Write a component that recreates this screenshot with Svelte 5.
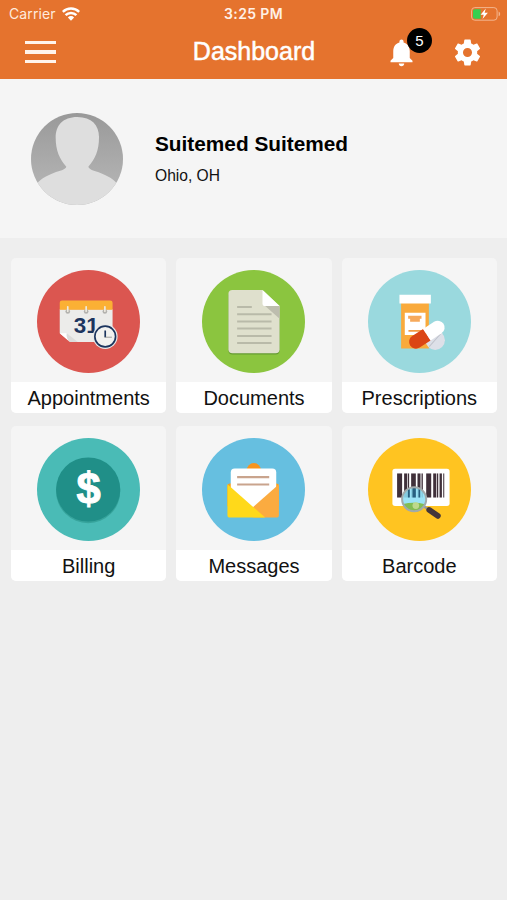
<script lang="ts">
	let user = { name: 'Suitemed Suitemed', location: 'Ohio, OH' };
	let notifications = 5;

	let tiles = [
		{ id: 'appointments', title: 'Appointments', color: '#db5650' },
		{ id: 'documents', title: 'Documents', color: '#8bc53f' },
		{ id: 'prescriptions', title: 'Prescriptions', color: '#9ad9de' },
		{ id: 'billing', title: 'Billing', color: '#4abbb6' },
		{ id: 'messages', title: 'Messages', color: '#66bfe0' },
		{ id: 'barcode', title: 'Barcode', color: '#ffc421' },
	];

	// [x, width] of each stripe on the barcode label
	let bars = [[87, 15], [108, 9], [119, 4], [129, 14], [148, 9], [160, 4], [174, 15], [195, 9], [206, 4], [214, 7], [225, 3]];
</script>

<div class="screen">
	<header>
		<div class="status">
			<div class="carrier">
				<span>Carrier</span>
				<svg width="18" height="14" viewBox="0 0 18 14" fill="none" stroke="#fff" stroke-width="2.5">
					<path d="M.8 4.900a11.600 11.600 0 0 1 16.400 0M3.600 8.200a7.500 7.500 0 0 1 10.800 0" />
					<path d="M5.900 10.400a4.400 4.400 0 0 1 6.200 0L9 13.700z" fill="#fff" stroke="none" />
				</svg>
			</div>
			<div class="time">3:25 PM</div>
			<svg class="battery" width="30" height="14" viewBox="0 0 30 14">
				<rect x=".6" y=".6" width="25.5" height="12.6" rx="3.2" fill="none" stroke="#f3b58e" />
				<path d="M27.6 4.6v4.6q1.6-.7 1.6-2.3t-1.6-2.3" fill="#f3b58e" />
				<path d="M3.8 2.2h5.8v9.6H3.8q-1.8 0-1.8-1.8V4q0-1.8 1.8-1.8" fill="#35d04f" />
				<path d="M14.8 1.6 9.6 7.7h3.2L11.5 12l5.4-6.2h-3.3z" fill="#fff" />
			</svg>
		</div>
		<div class="navbar">
			<button class="menu" aria-label="Menu"><i></i><i></i><i></i></button>
			<h1>Dashboard</h1>
			<div class="actions">
				<button class="bell" aria-label="Notifications">
					<svg width="33" height="33" viewBox="0 0 24 24" fill="#fff">
						<path d="M12 22c1.1 0 2-.9 2-2h-4c0 1.1.9 2 2 2zm6-6v-5c0-3.07-1.63-5.64-4.5-6.32V4c0-.83-.67-1.5-1.5-1.5s-1.500.67-1.500 1.500v.68C7.640 5.360 6 7.920 6 11v5l-2 2v1h16v-1l-2-2z" />
					</svg>
					<span class="badge">{notifications}</span>
				</button>
				<button class="settings" aria-label="Settings">
					<svg width="31" height="31" viewBox="0 0 24 24" fill="#fff">
						<path d="M19.430 12.980c.04-.32.07-.64.07-.98s-.03-.66-.07-.98l2.110-1.650c.19-.15.24-.42.12-.64l-2-3.460c-.12-.22-.39-.3-.61-.22l-2.490 1c-.52-.4-1.080-.73-1.690-.98l-.38-2.650C14.460 2.180 14.250 2 14 2h-4c-.25 0-.46.18-.49.42l-.38 2.650c-.61.25-1.170.59-1.690.98l-2.490-1c-.23-.09-.49 0-.61.22l-2 3.460c-.13.22-.07.49.12.64l2.110 1.650c-.04.32-.07.65-.07.98s.03.66.07.98l-2.110 1.650c-.19.15-.24.42-.12.64l2 3.460c.12.22.39.3.61.22l2.490-1c.52.4 1.080.73 1.690.98l.38 2.650c.03.24.24.42.49.42h4c.25 0 .46-.18.49-.42l.38-2.650c.61-.25 1.170-.59 1.690-.98l2.490 1c.23.09.49 0 .61-.22l2-3.460c.12-.22.07-.49-.12-.64l-2.110-1.650zM12 15.500a3.500 3.500 0 1 1 0-7 3.500 3.500 0 0 1 0 7z" />
					</svg>
				</button>
			</div>
		</div>
	</header>

	<section class="profile">
		<svg class="avatar" width="92" height="92" viewBox="0 0 276 276">
			<defs>
				<clipPath id="face"><circle cx="138" cy="138" r="138" /></clipPath>
				<linearGradient id="shade" x1="0" y1="0" x2="0" y2="1">
					<stop offset="0" stop-color="#999" />
					<stop offset=".7" stop-color="#b0b0b0" />
				</linearGradient>
			</defs>
			<g clip-path="url(#face)">
				<rect width="276" height="276" fill="url(#shade)" />
				<path fill="#dedede" d="M139 12c44 0 66 26 65 62 0 38-12 64-32 87 3 9 15 11 29 16 30 11 52 24 60 40v70H15v-70c8-16 30-29 60-40 14-5 28-7 31-16-20-23-32-49-32-87 0-36 21-62 65-62z" />
			</g>
		</svg>
		<div class="who">
			<h2>{user.name}</h2>
			<p>{user.location}</p>
		</div>
	</section>

	<main class="tiles">
		{#each tiles as tile}
			<div class="tile">
				<div class="picture">
					<svg width="103" height="103" viewBox="0 0 308 308">
						<circle cx="154" cy="154" r="154" fill={tile.color} />
						{#if tile.id === 'appointments'}
							<path d="M68 117h158v98H100l-32-26z" fill="#ececea" />
							<path d="M68 119V98q0-7 7-7h144q7 0 7 7v21z" fill="#fbb034" />
							<path d="M68 189l21 0q-2 14 9 26z" fill="#fff" />
							<path d="M89 189q-2 14 9 26h24z" fill="#dcdcda" />
							{#each [92, 147, 203] as x}
								<circle cx={x} cy="124" r="7" fill="#b3b2ae" />
								<path d="M{x} 110v13" stroke="#eeeae0" stroke-width="5" stroke-linecap="round" />
							{/each}
							<text x="110" y="187" class="day">31</text>
							<circle cx="204" cy="199" r="37" fill="#e8e8e8" />
							<circle cx="204" cy="199" r="31" fill="#f2f2f0" stroke="#1c355e" stroke-width="5" />
							<path d="M204 181v20" stroke="#1c355e" stroke-width="5" />
							<path d="M202 201h22" stroke="#777" stroke-width="2" />
						{:else if tile.id === 'documents'}
							<path d="M91 64h90l51 49v128q0 12-12 12H91q-12 0-12-12V76q0-12 12-12z" fill="#659b31" />
							<path d="M91 60h90l51 48v129q0 12-12 12H91q-12 0-12-12V72q0-12 12-12z" fill="#dfe0cd" />
							<path d="M189 108h43v38z" fill="#bdbdae" />
							<path d="M181 60l51 48h-43q-8 0-8-8z" fill="#fff" />
							<path d="M105 111h44M105 132h103M105 154h103M105 175h103M105 197h103M105 218h103" stroke="#b9baa9" stroke-width="6" />
						{:else if tile.id === 'prescriptions'}
							<path d="M99 98h83v137H99z" fill="#f9aa3c" />
							<path d="M94 74h94v26H94z" fill="#fff" />
							<path d="M110 128h62v66h-62z" fill="#fff" />
							<path d="M120 137h40v9h-5v9h-29v-9h-6z" fill="#f6a95b" />
							<path d="M121 182h40" stroke="#f39a43" stroke-width="5" />
							<circle cx="201" cy="210" r="29" fill="#dde0e8" />
							<path d="M183 229l35-39" stroke="#bfc2cb" stroke-width="3" />
							<g transform="translate(176 193.500) rotate(-33)">
								<path d="M0-20.500h-39a20.500 20.500 0 0 0 0 41H0z" fill="#db4515" />
								<path d="M0-20.500h39a20.500 20.500 0 0 1 0 41H0z" fill="#fff" />
							</g>
						{:else if tile.id === 'billing'}
							<circle cx="153" cy="159" r="96" fill="#37a49c" />
							<circle cx="153" cy="154" r="96" fill="#208f88" />
							<text x="154" y="196" class="dollar">$</text>
						{:else if tile.id === 'messages'}
							<circle cx="155" cy="96" r="21" fill="#f7941e" />
							<path d="M76 144q0-8 8-8h138q8 0 8 8v60H76z" fill="#f7a01e" />
							<path d="M98 91h112q12 0 12 12v105H86V103q0-12 12-12z" fill="#fff" />
							<path d="M230 138v92q0 8-8 8h-69v-32z" fill="#fbab40" />
							<path d="M76 138l77 68 36 32H84q-8 0-8-8z" fill="#ffd91a" />
							<path d="M105 117h96M105 139h96" stroke="#c9a48d" stroke-width="6" />
						{:else}
							<rect x="73" y="92" width="171" height="111" rx="8" fill="#fff" />
							{#each bars as [x, width]}
								<rect {x} y="106" {width} height="72" fill="#40303a" />
							{/each}
							<path d="M168 205l14 10" stroke="#9a9a98" stroke-width="7" />
							<path d="M183 215l26 18" stroke="#44363a" stroke-width="17" stroke-linecap="round" />
							<circle cx="138" cy="183" r="36" fill="#8ddff5" fill-opacity=".88" />
							<path d="M105 197q33-7 66 1-13 24-33 23-24-1-33-24z" fill="#82bd53" />
							<circle cx="143" cy="202" r="10" fill="#bed98b" />
							<path d="M119 153h6v25h-6zM133 149h10v29h-10zM151 153h5v25h-5z" fill="#276080" />
							<circle cx="138" cy="183" r="36" fill="none" stroke="#a1aaab" stroke-width="6" />
						{/if}
					</svg>
				</div>
				<div class="label">{tile.title}</div>
			</div>
		{/each}
	</main>
</div>

<style>
	:global(body) {
		background: #eee;
	}

	.screen {
		min-height: 900px;
		background: #eee;
		color: #111;
		font-family: "Liberation Sans", Arial, sans-serif;
	}

	header {
		height: 79px;
		background: #e5732e;
		color: #fff;
	}

	.status {
		display: grid;
		grid-template-columns: 1fr auto 1fr;
		align-items: center;
		height: 27px;
		padding: 0 6px 0 9px;
		box-sizing: border-box;
		font-family: Inter, sans-serif;
		font-size: 14px;
	}

	.carrier {
		display: flex;
		align-items: center;
		gap: 6px;
		color: #ffeadd;
		letter-spacing: 0.1px;
	}

	.time {
		margin-right: 3px;
		font-size: 14px;
		font-weight: 600;
		color: #fff0e6;
		letter-spacing: 0.35px;
	}

	.battery {
		justify-self: end;
	}

	.navbar {
		display: grid;
		grid-template-columns: 1fr auto 1fr;
		align-items: center;
		height: 50px;
		padding: 0 24px 0 25px;
	}

	button {
		display: flex;
		padding: 0;
		border: none;
		background: none;
		color: inherit;
		font: inherit;
	}

	.menu {
		flex-direction: column;
		gap: 6px;
		width: 31px;
	}

	.menu i {
		width: 31px;
		height: 3.3px;
		background: #fff4ec;
	}

	h1 {
		margin: 0;
		padding-bottom: 2px;
		font-size: 25px;
		font-weight: normal;
		line-height: 48px;
		-webkit-text-stroke: 0.5px #fff;
	}

	.actions {
		display: flex;
		justify-content: flex-end;
		align-items: center;
		gap: 34px;
	}

	.bell {
		position: relative;
	}

	.badge {
		position: absolute;
		left: 22px;
		top: -8px;
		width: 25px;
		height: 25px;
		border-radius: 50%;
		background: #000;
		font-size: 15px;
		line-height: 25px;
		text-align: center;
	}

	.profile {
		display: flex;
		align-items: center;
		gap: 32px;
		height: 159px;
		padding-left: 31px;
		background: #f5f5f5;
	}

	h2 {
		margin: 0;
		font-size: 20.8px;
		line-height: 28px;
		color: #000;
	}

	.who p {
		margin: 6px 0 0;
		font-size: 15.6px;
		line-height: 24px;
	}

	.tiles {
		display: grid;
		grid-template-columns: repeat(3, 1fr);
		gap: 13px 10px;
		padding: 20px 10px 0 11px;
	}

	.tile {
		border-radius: 5px;
		overflow: hidden;
		background: #f5f5f5;
	}

	.picture {
		display: flex;
		align-items: center;
		justify-content: center;
		height: 124px;
		padding-top: 2px;
		box-sizing: border-box;
	}

	.label {
		padding-top: 2px;
		background: #fff;
		font-size: 20px;
		line-height: 29px;
		text-align: center;
	}

	.day {
		font-size: 67px;
		font-weight: bold;
		fill: #1c355e;
	}

	.dollar {
		font-size: 130px;
		font-weight: bold;
		text-anchor: middle;
		fill: #fff;
		stroke: #fff;
		stroke-width: 3px;
	}
</style>
